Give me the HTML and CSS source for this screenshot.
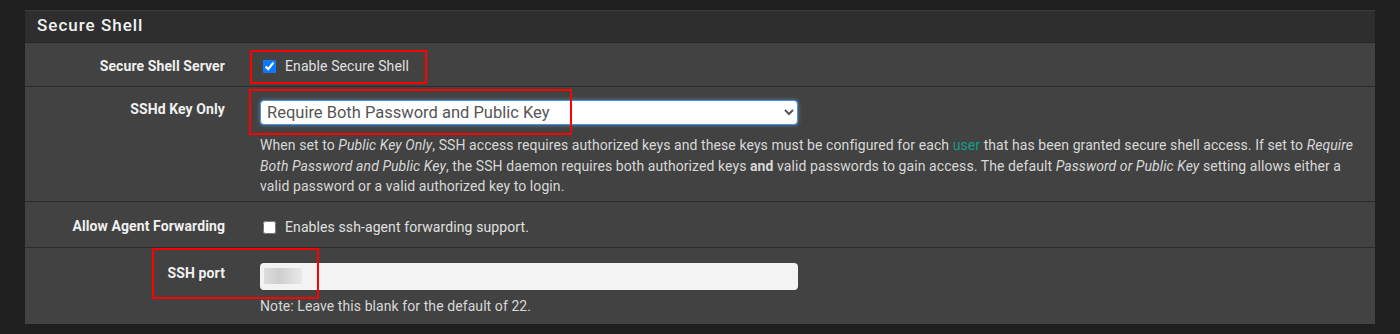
FILE: index.html
```html
<!DOCTYPE html>
<html lang="en">
<head>
    <meta charset="UTF-8">
    <title>Secure Shell</title>
    <link rel="stylesheet" href="styles.css">
</head>
<body>
    <div class="panel">
        <div class="panel-heading">Secure Shell</div>

        <div class="form-row">
            <div class="row-label">Secure Shell Server</div>
            <div class="row-field">
                <label class="check">
                    <input type="checkbox" checked>
                    <span>Enable Secure Shell</span>
                </label>
            </div>
            <span class="mark mark-enable"></span>
        </div>

        <div class="form-row">
            <div class="row-label">SSHd Key Only</div>
            <div class="row-field">
                <select class="select">
                    <option>Require Both Password and Public Key</option>
                </select>
                <p class="help">When set to <i>Public Key Only</i>, SSH access requires authorized keys and these keys must be configured for each <a href="#">user</a> that has been granted secure shell access. If set to <i>Require Both Password and Public Key</i>, the SSH daemon requires both authorized keys <b>and</b> valid passwords to gain access. The default <i>Password or Public Key</i> setting allows either a valid password or a valid authorized key to login.</p>
            </div>
            <span class="mark mark-select"></span>
        </div>

        <div class="form-row">
            <div class="row-label">Allow Agent Forwarding</div>
            <div class="row-field">
                <label class="check">
                    <input type="checkbox">
                    <span>Enables ssh-agent forwarding support.</span>
                </label>
            </div>
        </div>

        <div class="form-row">
            <div class="row-label">SSH port</div>
            <div class="row-field">
                <div class="input">
                    <span class="blur"></span>
                </div>
                <p class="help">Note: Leave this blank for the default of 22.</p>
            </div>
            <span class="mark mark-port"></span>
        </div>
    </div>
</body>
</html>
```

FILE: styles.css
```css
* {
    margin: 0;
    padding: 0;
    box-sizing: border-box;
}
body {
    font-family: Roboto, "Liberation Sans", sans-serif;
    background: #1f1f1f;
    color: #e6e6e6;
    padding: 10px 25px 0 25px;
    height: 334px;
    overflow: hidden;
}
.panel {
    background: #424242;
    border-top: 1px solid #3c3c3c;
}
.panel-heading {
    background: #2e2e2e;
    color: #f2f2f2;
    font-size: 17px;
    font-weight: 500;
    letter-spacing: 1px;
    height: 32px;
    line-height: 28px;
    padding-left: 12px;
    border-bottom: 1px solid #262626;
}
.form-row {
    position: relative;
    display: grid;
    grid-template-columns: 215px 1fr;
    border-bottom: 1px solid #2b2b2b;
}
.form-row:last-child {
    border-bottom: none;
}
.row-label {
    text-align: right;
    padding: 15px 15px 0 0;
    font-size: 14px;
    font-weight: 700;
    letter-spacing: 0.1px;
    color: #f0f0f0;
}
.row-field {
    padding: 13px 18px 0 20px;
    font-size: 14px;
    line-height: 20px;
}
.form-row:nth-child(2) {
    height: 44px;
}
.form-row:nth-child(3) {
    height: 115px;
}
.form-row:nth-child(3) .row-label {
    padding-top: 14px;
}
.form-row:nth-child(4) {
    height: 46px;
}
.form-row:nth-child(4) .row-label {
    padding-top: 16px;
}
.form-row:nth-child(4) .row-field {
    padding-top: 15px;
}
.form-row:nth-child(5) {
    height: 76px;
}
.form-row:nth-child(5) .row-label {
    padding-top: 17px;
}
.check {
    display: flex;
    align-items: center;
    gap: 9px;
    font-size: 14px;
    letter-spacing: 0.1px;
    color: #e0e0e0;
}
.check input {
    width: 13px;
    height: 13px;
    margin-left: 3px;
    accent-color: #0b78ff;
}
.select {
    display: block;
    width: 538px;
    height: 25px;
    border: 1px solid #4a90d9;
    border-radius: 4px;
    box-shadow: 0 0 4px rgba(102, 175, 233, 0.6);
    background: #ffffff;
    color: #555555;
    font-family: Roboto, "Liberation Sans", sans-serif;
    font-size: 16.5px;
    padding: 0 2px;
}
.help {
    margin-top: 10px;
    font-size: 14px;
    line-height: 20.5px;
    letter-spacing: 0.08px;
    color: #d8d8d8;
}
.help a {
    color: #169c8a;
    text-decoration: none;
}
.input {
    width: 538px;
    height: 27px;
    background: #f3f3f3;
    border-radius: 4px;
    margin-top: 2px;
    padding: 5px 0 0 4px;
}
.blur {
    display: block;
    width: 38px;
    height: 16px;
    background: linear-gradient(90deg, #d8d8d8, #c4c4c4 40%, #d6d6d6 70%, #e6e6e6);
    opacity: 0.8;
}
.form-row:nth-child(5) .help {
    margin-top: 6px;
}
.mark {
    position: absolute;
    border: 2px solid #ff0000;
}
.mark-enable {
    left: 225px;
    top: 7px;
    width: 177px;
    height: 34px;
}
.mark-select {
    left: 224px;
    top: 2px;
    width: 323px;
    height: 46px;
}
.mark-port {
    left: 127px;
    top: 0;
    width: 167px;
    height: 51px;
}
```
